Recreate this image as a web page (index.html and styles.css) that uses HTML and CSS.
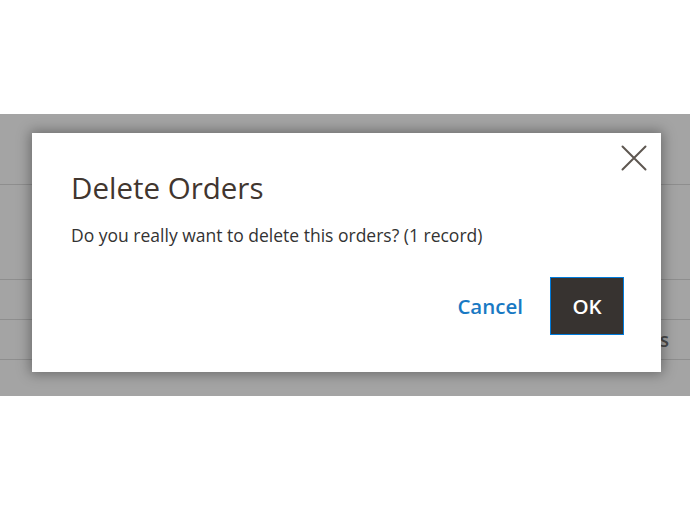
FILE: index.html
```html
<!DOCTYPE html>
<html lang="en">
<head>
<meta charset="utf-8">
<title>Delete Orders</title>
<link rel="stylesheet" href="styles.css">
</head>
<body>
<div class="page">
  <div class="top"></div>
  <div class="backdrop">
    <div class="row row-a"></div>
    <div class="row row-b"></div>
    <div class="row row-c"></div>
    <div class="row row-d"><span class="bg-text">Actions</span></div>
    <div class="row row-e"></div>

    <div class="modal" role="dialog" aria-labelledby="modal-title">
      <button class="close" aria-label="Close">
        <svg width="26" height="26" viewBox="0 0 26 26" aria-hidden="true">
          <path d="M1.5 1.5 L24.5 24.5 M24.5 1.5 L1.5 24.5" stroke="#5e5751" stroke-width="2" stroke-linecap="round" fill="none"/>
        </svg>
      </button>
      <h1 id="modal-title" class="title">Delete Orders</h1>
      <p class="message">Do you really want to delete this orders? (1 record)</p>
      <div class="actions">
        <button class="btn-cancel">Cancel</button>
        <button class="btn-ok">OK</button>
      </div>
    </div>
  </div>
</div>
</body>
</html>
```
FILE: styles.css
```css
* { box-sizing: border-box; }
html, body { margin: 0; padding: 0; background: #fff; }
body { font-family: "Open Sans", "Noto Sans", sans-serif; }

.page { width: 690px; height: 510px; overflow: hidden; }
.top { height: 114px; }

.backdrop {
  position: relative;
  height: 282px;
  background: #a4a4a4;
  display: flex;
  flex-direction: column;
}
.row { border-bottom: 1px solid #8e8e8e; flex: none; }
.row-a { height: 71px; }
.row-b { height: 95px; }
.row-c { height: 40px; }
.row-d { height: 40px; display: flex; align-items: center; justify-content: flex-end; }
.row-e { border-bottom: none; flex: 1; }
.bg-text { font-size: 19px; font-weight: 600; color: #4a4a4a; margin-right: 21px; }

.modal {
  position: absolute;
  left: 32px;
  top: 19px;
  width: 629px;
  height: 239px;
  background: #fff;
  box-shadow: 0 0 12px 2px rgba(0, 0, 0, 0.35);
  padding: 37px 37px 0 39px;
}

.close {
  position: absolute;
  top: 12px;
  right: 14px;
  width: 26px;
  height: 26px;
  padding: 0;
  border: 0;
  background: none;
  cursor: pointer;
  display: flex;
}

.title {
  margin: 0;
  font-size: 29.5px;
  font-weight: 400;
  line-height: 36px;
  color: #41362f;
}
.message {
  margin: 17px 0 0;
  font-size: 17.5px;
  line-height: 24px;
  color: #333;
}

.actions {
  display: flex;
  justify-content: flex-end;
  align-items: center;
  gap: 27px;
  margin-top: 30px;
}
.btn-cancel {
  border: 0;
  background: none;
  padding: 0;
  font-family: inherit;
  font-size: 20.5px;
  font-weight: 600;
  color: #1979c3;
  cursor: pointer;
}
.btn-ok {
  width: 74px;
  height: 58px;
  border: 1px solid #007bdb;
  background: #373330;
  color: #fff;
  font-family: inherit;
  font-size: 20.5px;
  font-weight: 600;
  cursor: pointer;
}
```
